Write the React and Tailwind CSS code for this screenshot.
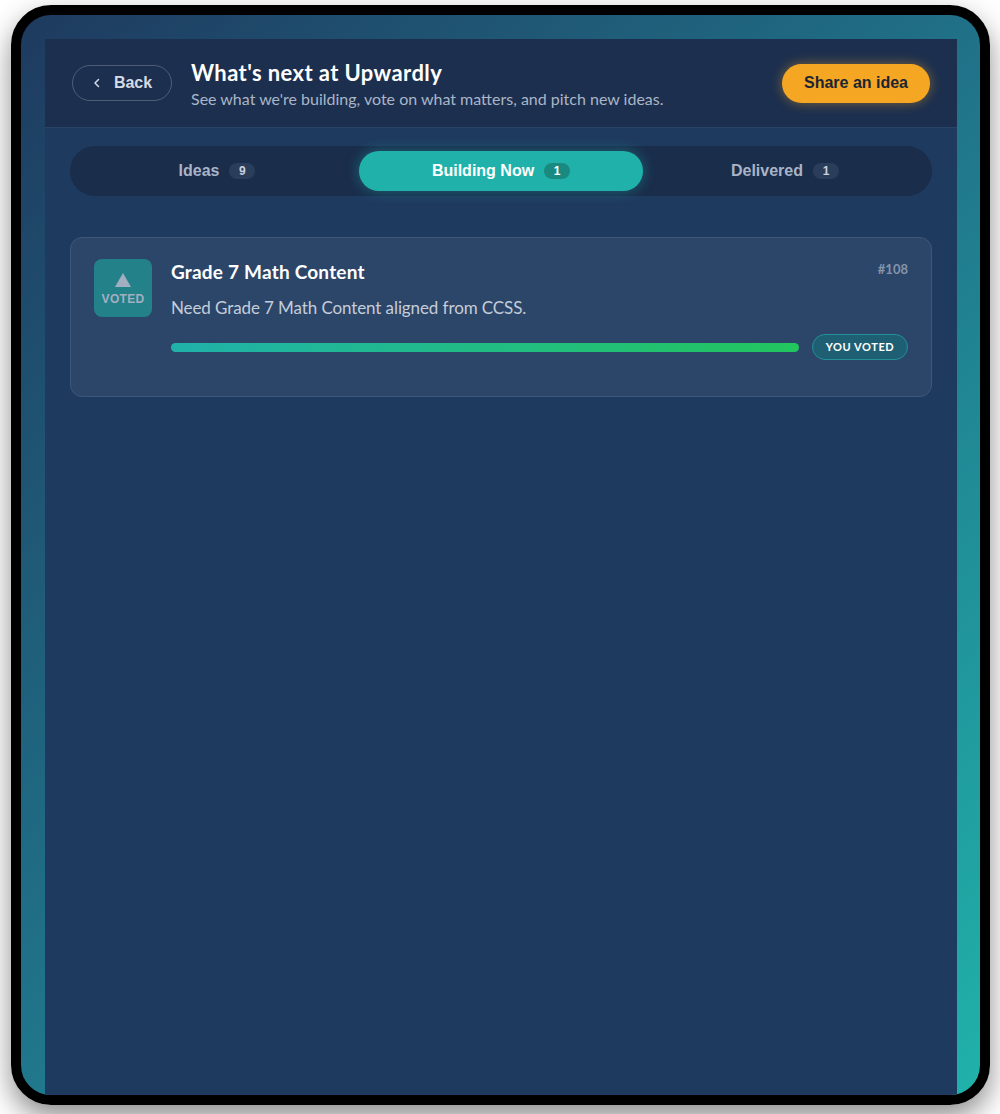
import React from "react";

const sans = { fontFamily: "Lato, 'Noto Sans', sans-serif" };
const arial = { fontFamily: "'Liberation Sans', Arial, sans-serif" };

function Tab({ label, count, active }) {
  return (
    <div
      className={
        "flex-1 flex items-center justify-center gap-[10px] rounded-full " +
        (active
          ? "bg-[#20b2aa] text-white shadow-[0_0_14px_rgba(32,178,170,0.45)]"
          : "text-[#a9b4c6]")
      }
      style={arial}
    >
      <span className="text-[16px] font-bold">{label}</span>
      <span
        className={
          "h-[16px] min-w-[26px] px-[8px] rounded-full text-[12px] font-bold flex items-center justify-center " +
          (active ? "bg-[#1a8a80] text-white" : "bg-[#2a3d5b] text-[#c8d0dc]")
        }
      >
        {count}
      </span>
    </div>
  );
}

export default function App() {
  return (
    <div className="w-[1000px] h-[1114px] bg-white pt-[5px] pl-[11px] pr-[10px] pb-[9px]">
      <div className="h-full rounded-[40px] border-[10px] border-black overflow-hidden bg-[linear-gradient(135deg,#1e3a5f_0%,#20748a_50%,#20b2aa_100%)] shadow-[0_12px_28px_rgba(0,0,0,0.45)] pt-[24px] pl-[24px] pr-[23px]">
        <div className="h-full flex flex-col bg-[#1f3a5f]">
          {/* header */}
          <div className="h-[89px] shrink-0 flex items-center px-[27px] bg-[#1c2f4e] border-b border-[#2a4468]">
            <button
              className="w-[100px] h-[36px] rounded-full border border-[rgba(255,255,255,0.22)] flex items-center justify-center gap-[12px] text-[#d4dbe5]"
              style={arial}
            >
              <svg width="10" height="10" viewBox="0 0 10 10" fill="none">
                <path d="M6.5 1.5 L3 5 L6.5 8.5" stroke="#d4dbe5" strokeWidth="1.5" strokeLinecap="round" strokeLinejoin="round" />
              </svg>
              <span className="text-[16px] font-bold">Back</span>
            </button>
            <div className="ml-[19px] pt-[3px] flex flex-col" style={sans}>
              <div className="text-[22px] font-bold text-white leading-[26px] tracking-[0.4px]">What's next at Upwardly</div>
              <div className="text-[16px] text-[#a9b6c8] leading-[20px] mt-[3px]">
                See what we're building, vote on what matters, and pitch new ideas.
              </div>
            </div>
            <button
              className="ml-auto w-[148px] h-[39px] rounded-full bg-[#f5a623] text-[#1c2533] text-[16px] font-bold shadow-[0_0_12px_rgba(245,166,35,0.45)]"
              style={arial}
            >
              Share an idea
            </button>
          </div>

          {/* tabs */}
          <div className="mt-[18px] mx-[25px] h-[50px] rounded-full bg-[#1a2d4b] p-[5px] flex">
            <Tab label="Ideas" count="9" />
            <Tab label="Building Now" count="1" active />
            <Tab label="Delivered" count="1" />
          </div>

          {/* card */}
          <div
            className="mt-[41px] mx-[25px] rounded-[12px] bg-[#2c4669] border border-[#3d5679] pt-[21px] px-[23px] pb-[36px] flex gap-[19px]"
            style={sans}
          >
            <div className="w-[58px] h-[58px] shrink-0 rounded-[8px] bg-[#23818a] flex flex-col items-center pt-[14px]">
              <svg width="16" height="14" viewBox="0 0 16 14">
                <path d="M8 0 L16 14 L0 14 Z" fill="#a3afc1" />
              </svg>
              <span className="mt-[5px] text-[12px] leading-[14px] font-bold text-[#a3afc1] tracking-[0.3px]" style={arial}>
                VOTED
              </span>
            </div>
            <div className="flex-1 flex flex-col">
              <div className="flex items-start justify-between">
                <div className="text-[19px] font-bold text-white leading-[26px] tracking-[0.2px]">Grade 7 Math Content</div>
                <div className="text-[13px] font-bold text-[#8594a9] leading-[16px] mt-[2px]">#108</div>
              </div>
              <div className="mt-[11px] text-[17px] text-[#c4cdd9] leading-[24px] tracking-[-0.1px]">
                Need Grade 7 Math Content aligned from CCSS.
              </div>
              <div className="mt-[14px] flex items-center gap-[13px]">
                <div className="flex-1 h-[9px] rounded-full bg-[linear-gradient(90deg,#20b2aa,#22c55e)]" />
                <div className="w-[96px] h-[26px] rounded-full bg-[#1f5f73] border border-[#23909a] flex items-center justify-center text-[11px] font-bold text-white tracking-[0.6px]">
                  YOU VOTED
                </div>
              </div>
            </div>
          </div>
        </div>
      </div>
    </div>
  );
}
